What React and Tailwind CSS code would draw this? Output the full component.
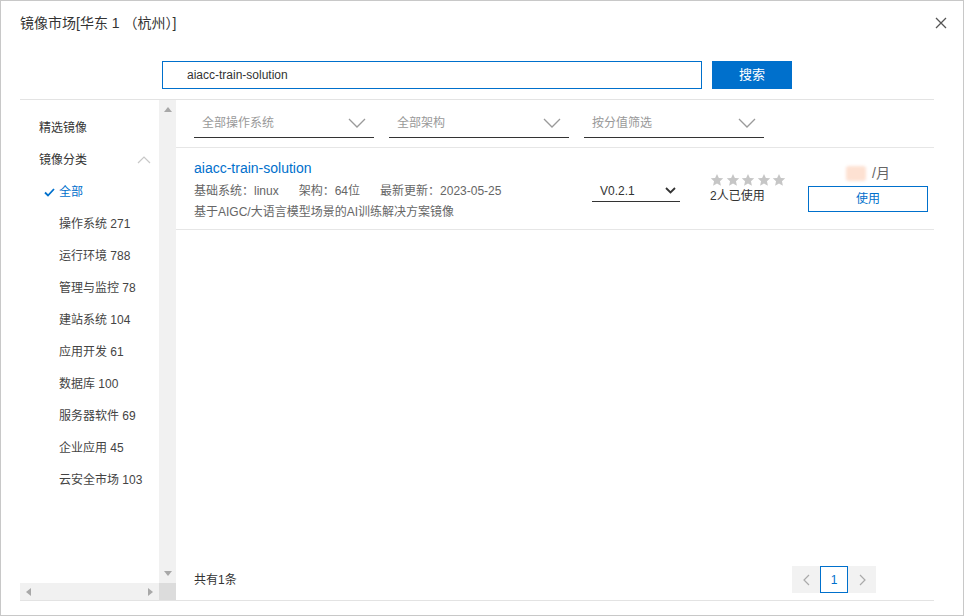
import React from "react";

const FONT = { fontFamily: '"Liberation Sans", "Noto Sans CJK SC", Arial, sans-serif' };

function Chevron({ className = "" }) {
  return (
    <svg width="18" height="10" viewBox="0 0 18 10" className={className}>
      <path d="M1 1 L9 9 L17 1" fill="none" stroke="#9a9a9a" strokeWidth="1.3" />
    </svg>
  );
}

function Star() {
  return (
    <svg width="14" height="14" viewBox="0 0 24 24">
      <path
        d="M12 1.5l3.2 6.9 7.5.8-5.6 5.1 1.6 7.4L12 17.9l-6.7 3.8 1.6-7.4L1.3 9.2l7.5-.8z"
        fill="#c6c6c6"
      />
    </svg>
  );
}

const cats = [
  "操作系统 271",
  "运行环境 788",
  "管理与监控 78",
  "建站系统 104",
  "应用开发 61",
  "数据库 100",
  "服务器软件 69",
  "企业应用 45",
  "云安全市场 103",
];

export default function App() {
  return (
    <div
      style={FONT}
      className="relative w-[964px] h-[616px] border border-[#c8c8c8] bg-white text-[#333] overflow-hidden"
    >
      {/* header */}
      <div className="h-[44px] flex items-center pl-[19px] text-[14px] text-[#333]">
        镜像市场[华东 1 （杭州）]
      </div>
      <svg
        className="absolute right-[16px] top-[16px]"
        width="12"
        height="12"
        viewBox="0 0 12 12"
      >
        <path d="M1 1 L11 11 M11 1 L1 11" stroke="#555" strokeWidth="1.3" />
      </svg>

      {/* search */}
      <div className="mt-[16px] flex pl-[161px]">
        <div className="w-[540px] h-[28px] border border-[#0070cc] flex items-center pl-[24px] text-[12px] text-[#333]">
          aiacc-train-solution
        </div>
        <button className="ml-[10px] w-[80px] h-[28px] bg-[#0070cc] text-white text-[13px] flex items-center justify-center">
          搜索
        </button>
      </div>

      {/* main */}
      <div className="mt-[10px] ml-[19px] mr-[29px] h-[502px] border-t border-b border-[#e3e3e3] flex">
        {/* sidebar */}
        <div className="w-[156px] flex flex-col">
          <div className="flex flex-1">
            <div className="w-[139px] pt-[12px] text-[12px]">
              <div className="h-[32px] flex items-center pl-[19px]">精选镜像</div>
              <div className="h-[32px] flex items-center pl-[19px] pr-[8px] justify-between">
                <span>镜像分类</span>
                <svg width="14" height="8" viewBox="0 0 14 8">
                  <path d="M1 7 L7 1 L13 7" fill="none" stroke="#c8c8c8" strokeWidth="1.2" />
                </svg>
              </div>
              <div className="h-[32px] flex items-center pl-[24px] text-[#0070cc]">
                <svg width="11" height="9" viewBox="0 0 11 9" className="mr-[4px]">
                  <path d="M1 4.5 L4 7.5 L10 1" fill="none" stroke="#0070cc" strokeWidth="1.8" />
                </svg>
                全部
              </div>
              {cats.map((c) => (
                <div key={c} className="h-[32px] flex items-center pl-[39px] text-[#444]">
                  {c}
                </div>
              ))}
            </div>
            <div className="w-[17px] bg-[#f1f1f1] flex flex-col items-center justify-between py-[7px]">
              <svg width="8" height="5" viewBox="0 0 8 5">
                <path d="M0 5 L4 0 L8 5z" fill="#a8a8a8" />
              </svg>
              <svg width="8" height="5" viewBox="0 0 8 5">
                <path d="M0 0 L4 5 L8 0z" fill="#a8a8a8" />
              </svg>
            </div>
          </div>
          <div className="h-[17px] flex">
            <div className="w-[139px] bg-[#f1f1f1] flex items-center justify-between px-[6px]">
              <svg width="5" height="8" viewBox="0 0 5 8">
                <path d="M5 0 L0 4 L5 8z" fill="#a8a8a8" />
              </svg>
              <svg width="5" height="8" viewBox="0 0 5 8">
                <path d="M0 0 L5 4 L0 8z" fill="#a8a8a8" />
              </svg>
            </div>
            <div className="w-[17px] bg-[#dcdcdc]" />
          </div>
        </div>

        {/* right panel */}
        <div className="flex-1 flex flex-col">
          <div className="h-[48px] border-b border-[#e6e6e6] flex items-start pl-[18px] gap-[15px]">
            {["全部操作系统", "全部架构", "按分值筛选"].map((t) => (
              <div
                key={t}
                className="mt-[8px] w-[180px] h-[30px] border-b border-[#333] flex items-center justify-between pl-[8px] pr-[8px] text-[12px] text-[#999]"
              >
                <span>{t}</span>
                <Chevron />
              </div>
            ))}
          </div>

          <div className="h-[82px] border-b border-[#e6e6e6] flex items-start pl-[18px] pr-[6px]">
            <div className="w-[398px] pt-[10px]">
              <div className="h-[20px] leading-[20px] text-[14px] text-[#0070cc]">
                aiacc-train-solution
              </div>
              <div className="mt-[4px] h-[18px] leading-[18px] text-[12px] text-[#666] flex">
                <span>基础系统：linux</span>
                <span className="ml-[20px]">架构：64位</span>
                <span className="ml-[20px]">最新更新：2023-05-25</span>
              </div>
              <div className="mt-[3px] h-[18px] leading-[18px] text-[12px] text-[#666]">
                基于AIGC/大语言模型场景的AI训练解决方案镜像
              </div>
            </div>
            <div className="mt-[32px] w-[88px] h-[22px] border-b border-[#333] flex items-center justify-between pl-[8px] pr-[4px] text-[12px] text-[#333]">
              <span>V0.2.1</span>
              <svg width="11" height="7" viewBox="0 0 11 7">
                <path d="M1 1 L5.5 5.5 L10 1" fill="none" stroke="#333" strokeWidth="1.8" />
              </svg>
            </div>
            <div className="ml-[30px] mt-[25px] w-[98px]">
              <div className="h-[14px] flex items-center gap-[1.5px]">
                <Star />
                <Star />
                <Star />
                <Star />
                <Star />
              </div>
              <div className="h-[16px] leading-[16px] mt-[1px] text-[12px] text-[#333]">2人已使用</div>
            </div>
            <div className="mt-[16px] w-[120px] flex flex-col">
              <div className="h-[18px] flex items-center justify-center">
                <div className="w-[20px] h-[15px] rounded-[3px] bg-[#fde1d2] blur-[1.5px]" />
                <span className="ml-[6px] text-[14px] text-[#666]">/月</span>
              </div>
              <button className="mt-[4px] h-[26px] w-[120px] border border-[#0070cc] text-[#0070cc] text-[12px] flex items-center justify-center bg-white">
                使用
              </button>
            </div>
          </div>

          <div className="flex-1" />

          <div className="h-[27px] mb-[7px] flex items-center justify-between pl-[18px] pr-[58px]">
            <span className="text-[12px] text-[#333]">共有1条</span>
            <div className="flex h-[27px]">
              <div className="w-[28px] h-[27px] bg-[#f2f2f2] flex items-center justify-center">
                <svg width="7" height="12" viewBox="0 0 7 12">
                  <path d="M6 1 L1 6 L6 11" fill="none" stroke="#aaa" strokeWidth="1.2" />
                </svg>
              </div>
              <div className="w-[28px] h-[27px] border border-[#0070cc] flex items-center justify-center text-[12px] text-[#0070cc]">
                1
              </div>
              <div className="w-[28px] h-[27px] bg-[#f2f2f2] flex items-center justify-center">
                <svg width="7" height="12" viewBox="0 0 7 12">
                  <path d="M1 1 L6 6 L1 11" fill="none" stroke="#aaa" strokeWidth="1.2" />
                </svg>
              </div>
            </div>
          </div>
        </div>
      </div>
    </div>
  );
}
